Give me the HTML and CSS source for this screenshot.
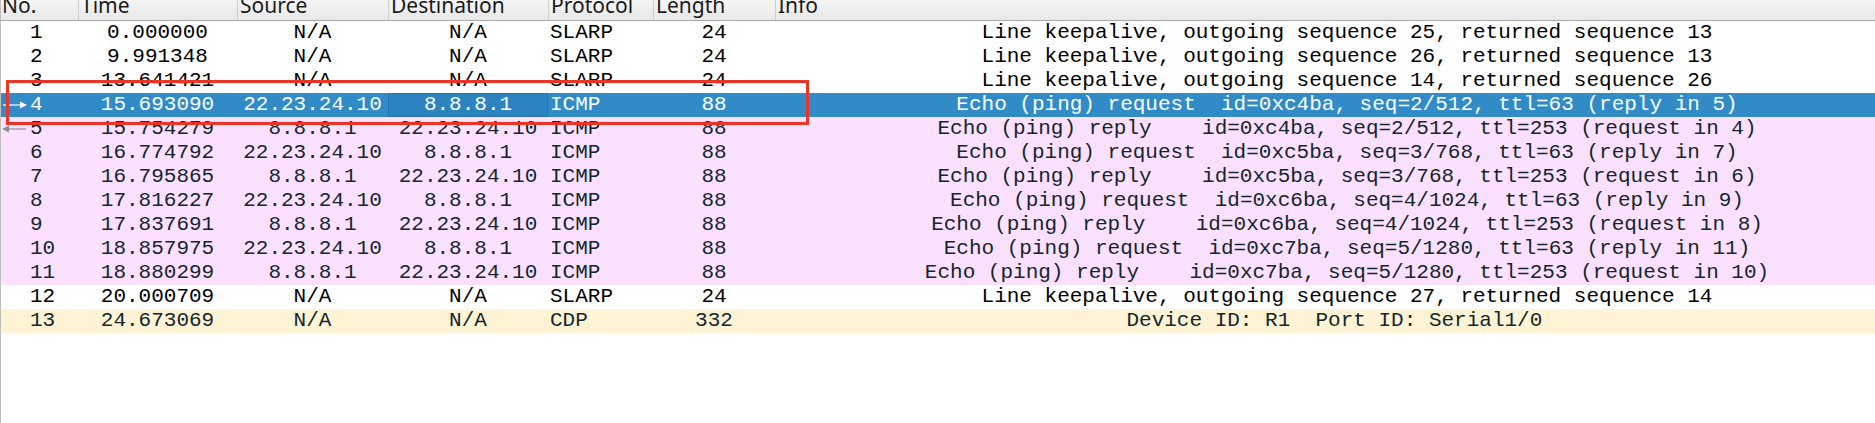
FILE: index.html
```html
<!DOCTYPE html>
<html>
<head>
<meta charset="utf-8">
<link rel="stylesheet" href="styles.css">
</head>
<body>
<div class="list">
  <div class="header">
    <div class="hcell first">No.</div>
    <div class="hcell">Time</div>
    <div class="hcell">Source</div>
    <div class="hcell">Destination</div>
    <div class="hcell">Protocol</div>
    <div class="hcell">Length</div>
    <div class="hcell">Info</div>
  </div>
  <div class="rows">
    <div class="row plain">
      <div class="cell no"><span class="mark"></span><span>1</span></div>
      <div class="cell c">0.000000</div>
      <div class="cell c">N/A</div>
      <div class="cell c">N/A</div>
      <div class="cell l">SLARP</div>
      <div class="cell c">24</div>
      <div class="cell c">Line keepalive, outgoing sequence 25, returned sequence 13</div>
    </div>
    <div class="row plain">
      <div class="cell no"><span class="mark"></span><span>2</span></div>
      <div class="cell c">9.991348</div>
      <div class="cell c">N/A</div>
      <div class="cell c">N/A</div>
      <div class="cell l">SLARP</div>
      <div class="cell c">24</div>
      <div class="cell c">Line keepalive, outgoing sequence 26, returned sequence 13</div>
    </div>
    <div class="row plain">
      <div class="cell no"><span class="mark"></span><span>3</span></div>
      <div class="cell c">13.641421</div>
      <div class="cell c">N/A</div>
      <div class="cell c">N/A</div>
      <div class="cell l">SLARP</div>
      <div class="cell c">24</div>
      <div class="cell c">Line keepalive, outgoing sequence 14, returned sequence 26</div>
    </div>
    <div class="row selected">
      <div class="cell no"><svg class="mark" width="26" height="24" viewBox="0 0 26 24"><line x1="2" y1="12" x2="21" y2="12" stroke="#ffffff" stroke-width="1.2"/><polygon points="19,8.5 26,12 19,15.5" fill="#ffffff"/></svg><span>4</span></div>
      <div class="cell c">15.693090</div>
      <div class="cell c">22.23.24.10</div>
      <div class="cell c focus">8.8.8.1</div>
      <div class="cell l">ICMP</div>
      <div class="cell c">88</div>
      <div class="cell c">Echo (ping) request  id=0xc4ba, seq=2/512, ttl=63 (reply in 5)</div>
    </div>
    <div class="row icmp">
      <div class="cell no"><svg class="mark" width="26" height="24" viewBox="0 0 26 24"><line x1="6" y1="12" x2="25" y2="12" stroke="#8c8c8c" stroke-width="1.2"/><polygon points="1,12 8,8.5 8,15.5" fill="#8c8c8c"/></svg><span>5</span></div>
      <div class="cell c">15.754279</div>
      <div class="cell c">8.8.8.1</div>
      <div class="cell c">22.23.24.10</div>
      <div class="cell l">ICMP</div>
      <div class="cell c">88</div>
      <div class="cell c">Echo (ping) reply    id=0xc4ba, seq=2/512, ttl=253 (request in 4)</div>
    </div>
    <div class="row icmp">
      <div class="cell no"><span class="mark"></span><span>6</span></div>
      <div class="cell c">16.774792</div>
      <div class="cell c">22.23.24.10</div>
      <div class="cell c">8.8.8.1</div>
      <div class="cell l">ICMP</div>
      <div class="cell c">88</div>
      <div class="cell c">Echo (ping) request  id=0xc5ba, seq=3/768, ttl=63 (reply in 7)</div>
    </div>
    <div class="row icmp">
      <div class="cell no"><span class="mark"></span><span>7</span></div>
      <div class="cell c">16.795865</div>
      <div class="cell c">8.8.8.1</div>
      <div class="cell c">22.23.24.10</div>
      <div class="cell l">ICMP</div>
      <div class="cell c">88</div>
      <div class="cell c">Echo (ping) reply    id=0xc5ba, seq=3/768, ttl=253 (request in 6)</div>
    </div>
    <div class="row icmp">
      <div class="cell no"><span class="mark"></span><span>8</span></div>
      <div class="cell c">17.816227</div>
      <div class="cell c">22.23.24.10</div>
      <div class="cell c">8.8.8.1</div>
      <div class="cell l">ICMP</div>
      <div class="cell c">88</div>
      <div class="cell c">Echo (ping) request  id=0xc6ba, seq=4/1024, ttl=63 (reply in 9)</div>
    </div>
    <div class="row icmp">
      <div class="cell no"><span class="mark"></span><span>9</span></div>
      <div class="cell c">17.837691</div>
      <div class="cell c">8.8.8.1</div>
      <div class="cell c">22.23.24.10</div>
      <div class="cell l">ICMP</div>
      <div class="cell c">88</div>
      <div class="cell c">Echo (ping) reply    id=0xc6ba, seq=4/1024, ttl=253 (request in 8)</div>
    </div>
    <div class="row icmp">
      <div class="cell no"><span class="mark"></span><span>10</span></div>
      <div class="cell c">18.857975</div>
      <div class="cell c">22.23.24.10</div>
      <div class="cell c">8.8.8.1</div>
      <div class="cell l">ICMP</div>
      <div class="cell c">88</div>
      <div class="cell c">Echo (ping) request  id=0xc7ba, seq=5/1280, ttl=63 (reply in 11)</div>
    </div>
    <div class="row icmp">
      <div class="cell no"><span class="mark"></span><span>11</span></div>
      <div class="cell c">18.880299</div>
      <div class="cell c">8.8.8.1</div>
      <div class="cell c">22.23.24.10</div>
      <div class="cell l">ICMP</div>
      <div class="cell c">88</div>
      <div class="cell c">Echo (ping) reply    id=0xc7ba, seq=5/1280, ttl=253 (request in 10)</div>
    </div>
    <div class="row plain">
      <div class="cell no"><span class="mark"></span><span>12</span></div>
      <div class="cell c">20.000709</div>
      <div class="cell c">N/A</div>
      <div class="cell c">N/A</div>
      <div class="cell l">SLARP</div>
      <div class="cell c">24</div>
      <div class="cell c">Line keepalive, outgoing sequence 27, returned sequence 14</div>
    </div>
    <div class="row cdp">
      <div class="cell no"><span class="mark"></span><span>13</span></div>
      <div class="cell c">24.673069</div>
      <div class="cell c">N/A</div>
      <div class="cell c">N/A</div>
      <div class="cell l">CDP</div>
      <div class="cell c">332</div>
      <div class="cell c">Device ID: R1  Port ID: Serial1/0  </div>
    </div>
  </div>
  <div class="annotation"></div>
</div>
</body>
</html>
```

FILE: styles.css
```css
html, body {
  margin: 0;
  padding: 0;
  background: #ffffff;
  overflow: hidden;
}

.list {
  position: relative;
  width: max-content;
  min-height: 423px;
  border-left: 1px solid #bdbdbd;
  background: #ffffff;
}

.header,
.row {
  display: grid;
  grid-template-columns: 77px 159px 151px 160px 105px 122px 1144px;
}

.header {
  height: 20px;
  background: linear-gradient(#f5f5f5, #e8e8e8);
  border-bottom: 1px solid #a9a9a9;
}

.hcell {
  font-family: "Noto Sans", "Open Sans", sans-serif;
  font-size: 21px;
  line-height: 10px;
  color: #1a1a1a;
  padding-left: 2px;
  border-left: 1px solid #cdcdcd;
  white-space: nowrap;
  overflow: visible;
}

.hcell.first {
  border-left: none;
  padding-left: 1px;
}

.row {
  height: 24px;
  font-family: "Liberation Mono", "DejaVu Sans Mono", monospace;
  font-size: 21px;
  line-height: 24px;
  white-space: pre;
}

.row.plain {
  background: #ffffff;
  color: #000000;
}

.row.icmp {
  background: #fce0ff;
  color: #12272e;
}

.row.cdp {
  background: #fff3d6;
  color: #12272e;
}

.row.selected {
  background: #308bc7;
  color: #ffffff;
}

.cell {
  overflow: hidden;
}

.cell.c {
  text-align: center;
}

.cell.l {
  padding-left: 2px;
}

.cell.no {
  display: flex;
  align-items: center;
  gap: 3px;
}

.mark {
  display: block;
  width: 26px;
  height: 24px;
  flex: none;
}

.cell.focus {
  background: #2c83bf;
  box-shadow: inset 0 0 0 1px #2371aa;
}

.annotation {
  position: absolute;
  left: 5px;
  top: 80px;
  width: 797px;
  height: 39px;
  border: 3px solid #ea3526;
  pointer-events: none;
}
```
